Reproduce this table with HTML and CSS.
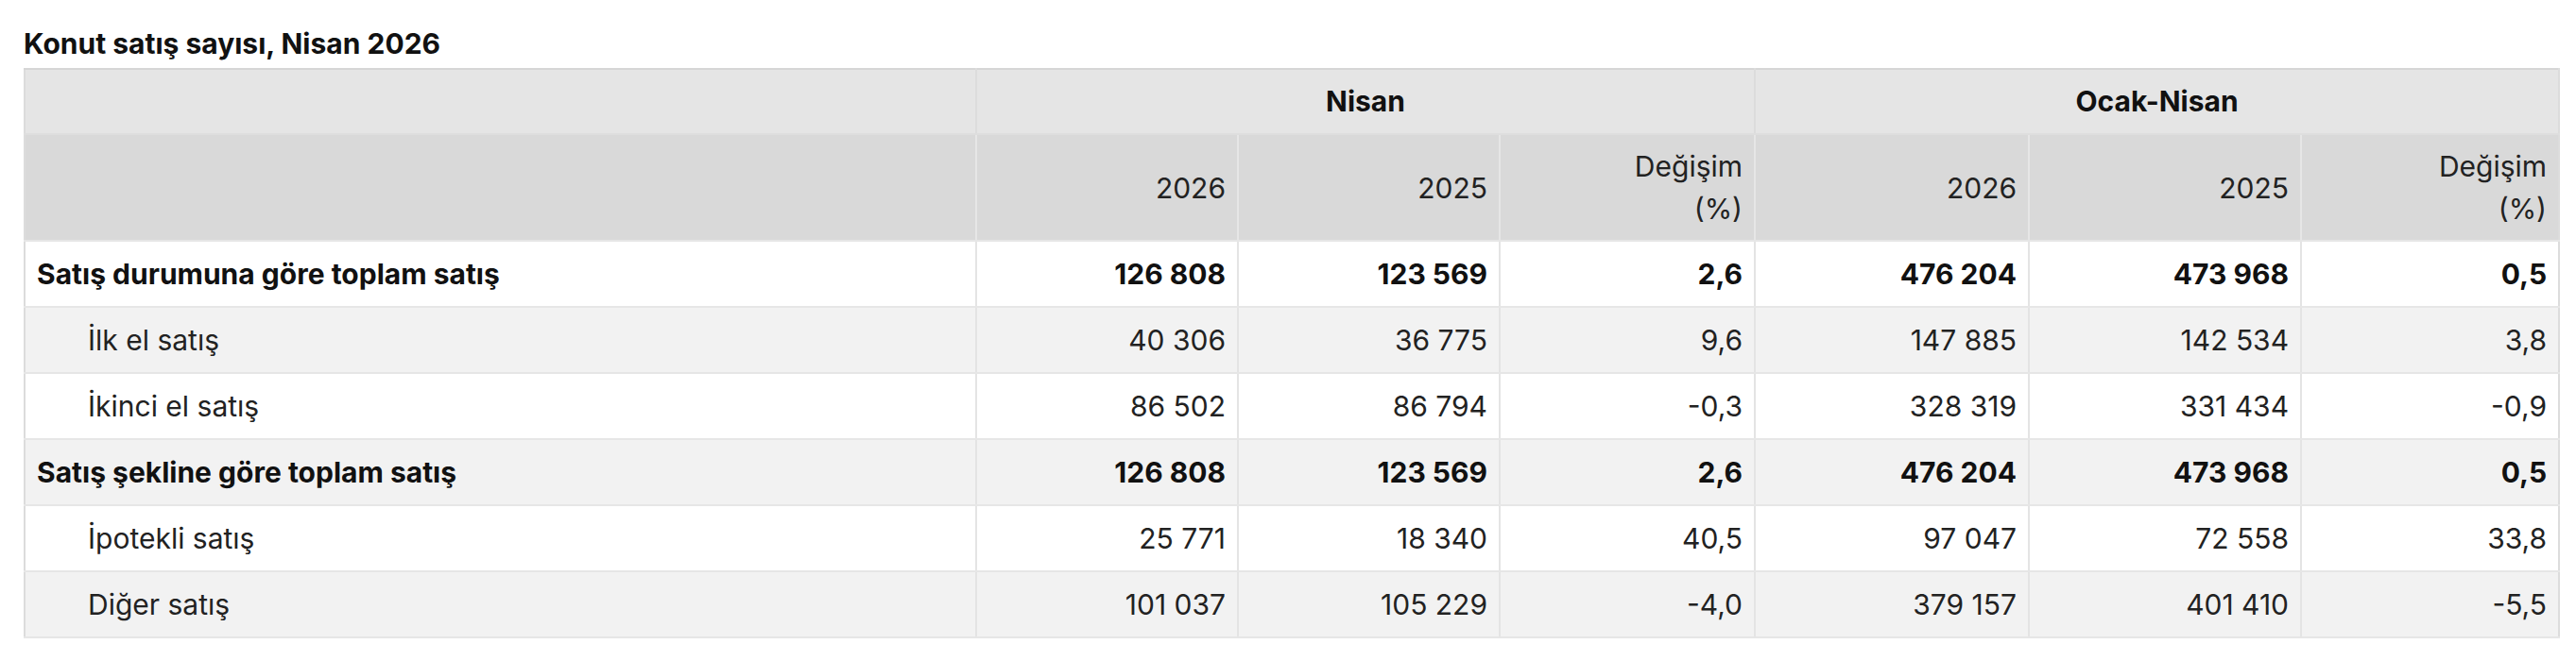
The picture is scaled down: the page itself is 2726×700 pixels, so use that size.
FILE: index.html
```html
<!DOCTYPE html>
<html lang="tr">
<head>
<meta charset="utf-8">
<title>Konut satış sayısı, Nisan 2026</title>
<link rel="stylesheet" href="styles.css">
</head>
<body>
<div class="page">
  <h2 class="title">Konut satış sayısı, Nisan 2026</h2>
  <table class="stats">
    <colgroup>
      <col class="c-label">
      <col class="c-n26">
      <col class="c-n25">
      <col class="c-nd">
      <col class="c-o26">
      <col class="c-o25">
      <col class="c-od">
    </colgroup>
    <thead>
      <tr class="head-top">
        <th></th>
        <th colspan="3" class="group">Nisan</th>
        <th colspan="3" class="group">Ocak-Nisan</th>
      </tr>
      <tr class="head-sub">
        <th></th>
        <th>2026</th>
        <th>2025</th>
        <th>Değişim<br>(%)</th>
        <th>2026</th>
        <th>2025</th>
        <th>Değişim<br>(%)</th>
      </tr>
    </thead>
    <tbody>
      <tr class="total">
        <td>Satış durumuna göre toplam satış</td>
        <td>126 808</td><td>123 569</td><td>2,6</td>
        <td>476 204</td><td>473 968</td><td>0,5</td>
      </tr>
      <tr class="sub">
        <td>İlk el satış</td>
        <td>40 306</td><td>36 775</td><td>9,6</td>
        <td>147 885</td><td>142 534</td><td>3,8</td>
      </tr>
      <tr class="sub">
        <td>İkinci el satış</td>
        <td>86 502</td><td>86 794</td><td>-0,3</td>
        <td>328 319</td><td>331 434</td><td>-0,9</td>
      </tr>
      <tr class="total">
        <td>Satış şekline göre toplam satış</td>
        <td>126 808</td><td>123 569</td><td>2,6</td>
        <td>476 204</td><td>473 968</td><td>0,5</td>
      </tr>
      <tr class="sub">
        <td>İpotekli satış</td>
        <td>25 771</td><td>18 340</td><td>40,5</td>
        <td>97 047</td><td>72 558</td><td>33,8</td>
      </tr>
      <tr class="sub">
        <td>Diğer satış</td>
        <td>101 037</td><td>105 229</td><td>-4,0</td>
        <td>379 157</td><td>401 410</td><td>-5,5</td>
      </tr>
    </tbody>
  </table>
</div>
</body>
</html>
```

FILE: styles.css
```css
html, body {
  margin: 0;
  padding: 0;
  background: #ffffff;
}

.page {
  padding: 24px 19px 0 25px;
  font-family: Inter, "Noto Sans", "Liberation Sans", sans-serif;
  color: #222222;
}

.title {
  margin: 0 0 3px 0;
  font-size: 30px;
  line-height: 45px;
  font-weight: 700;
  color: #111111;
}

.stats {
  width: 100%;
  table-layout: fixed;
  border-collapse: collapse;
  font-size: 30px;
  line-height: 45px;
  border-top: 2px solid #d6d6d6;
  border-left: 2px solid #dcdcdc;
  border-right: 2px solid #dcdcdc;
  border-bottom: 2px solid #e2e2e2;
}

.c-label { width: 1007px; }
.c-n26 { width: 277px; }
.c-n25 { width: 277px; }
.c-nd { width: 270px; }
.c-o26 { width: 290px; }
.c-o25 { width: 288px; }
.c-od { width: 273px; }

.stats th,
.stats td {
  padding: 12px 12px 11px 12px;
  text-align: right;
  border-left: 2px solid #e4e4e4;
  border-bottom: 2px solid #e6e6e6;
  white-space: nowrap;
}

.stats th:first-child,
.stats td:first-child {
  text-align: left;
  border-left: none;
}

.head-top th {
  background: #e5e5e5;
  font-weight: 700;
  color: #111111;
  padding-top: 11px;
  border-bottom: 2px solid #dedede;
}

.head-top th.group {
  text-align: center;
  border-left: 2px solid #dcdcdc;
}

.head-sub th {
  background: #d9d9d9;
  font-weight: 400;
  color: #222222;
  padding-top: 11px;
  padding-bottom: 10px;
  border-left: 2px solid #e6e6e6;
}

.stats tbody tr:nth-child(odd) td { background: #ffffff; }
.stats tbody tr:nth-child(even) td { background: #f2f2f2; }

.total td {
  font-weight: 700;
  color: #111111;
}

.sub td:first-child {
  padding-left: 66px;
}
```
